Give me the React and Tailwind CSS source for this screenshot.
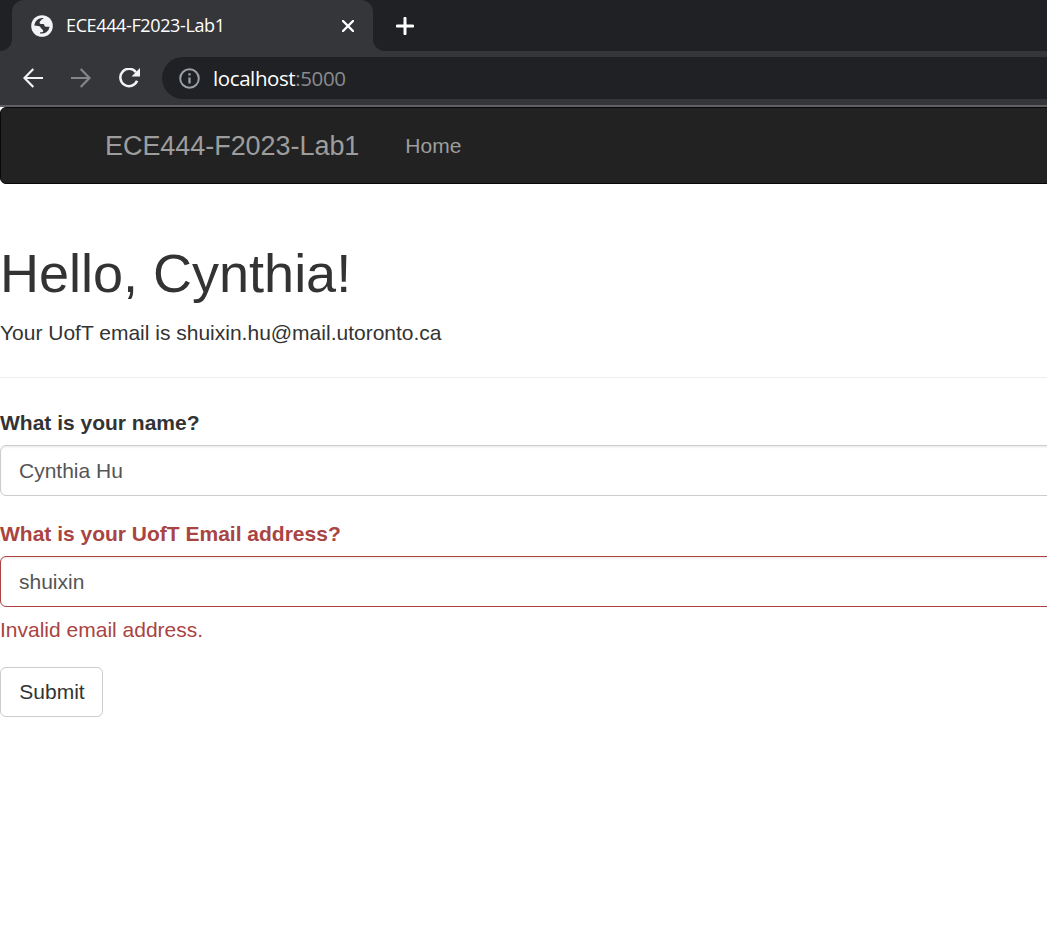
import React from "react";

function Globe() {
  return (
    <svg width="22" height="22" viewBox="0 0 22 22" className="shrink-0">
      <circle cx="11" cy="11" r="10.8" fill="#f1f3f4" />
      <path fill="#35363a" d="M12.8 3.2C12.2 4.2 10.5 4 10.2 5C10 6 8.9 6.2 8.6 7.2C8.4 8.4 9.2 9 10.4 9H12.4C13.6 9.2 13 10.8 14 11.4C15 12 16.5 11.7 18.6 11.7A7.9 7.9 0 0 1 9 18.4V17.4C10 17.1 11.8 17.4 12.2 16.2C12.4 14.8 11.1 14.2 10.3 13.4C9.4 12.2 8.8 11 7.2 11L3.2 10.6A8 8 0 0 1 12.8 3.2Z" />
    </svg>
  );
}

function BrowserChrome() {
  return (
    <header className="font-['Open_Sans','Noto_Sans',sans-serif]">
      <div className="flex h-[51px] bg-[#35363a]">
        <div className="w-3 rounded-br-xl bg-[#202124]" />
        <div className="flex w-[361px] bg-[#202124]">
          <div className="flex w-full items-center rounded-t-xl bg-[#35363a] pr-[19px] pl-[19px]">
            <Globe />
            <span className="ml-[13px] text-[18px] tracking-[-0.37px] text-white">ECE444-F2023-Lab1</span>
            <svg width="12" height="12" viewBox="0 0 12 12" className="ml-auto" stroke="#fff" strokeWidth="2.4" strokeLinecap="round">
              <path d="M1 1L11 11M11 1L1 11" />
            </svg>
          </div>
        </div>
        <div className="flex flex-1 items-center rounded-bl-xl bg-[#202124] pl-[23px]">
          <svg width="18" height="18" viewBox="0 0 18 18" stroke="#fff" strokeWidth="3" strokeLinecap="round">
            <path d="M1.3 9H16.7M9 1.3V16.7" />
          </svg>
        </div>
      </div>
      <div className="flex h-[54px] items-center bg-[#35363a]">
        <svg width="20" height="20" viewBox="0 0 20 20" className="ml-[23px]" fill="none" stroke="#f1f3f4" strokeWidth="2.2">
          <path d="M20 10H1.5M10.3 1L1.5 10L10.3 19" />
        </svg>
        <svg width="20" height="20" viewBox="0 0 20 20" className="ml-[28px]" fill="none" stroke="#85868a" strokeWidth="2.2">
          <path d="M0 10H18.5M9.7 1L18.5 10L9.7 19" />
        </svg>
        <svg width="21" height="20" viewBox="0 0 21 20" className="ml-[28px]" fill="none" stroke="#f1f3f4" strokeWidth="2.5">
          <path d="M17 4.2A8.7 8.7 0 1 0 18.1 12.8" />
          <path d="M21 0V8.4H12.6Z" fill="#f1f3f4" stroke="none" />
        </svg>
        <div className="ml-[22px] flex h-[42px] flex-1 items-center rounded-l-full bg-[#202124] pl-[17px]">
          <svg width="21" height="21" viewBox="0 0 21 21" fill="none" stroke="#9aa0a6" strokeWidth="2">
            <circle cx="10.5" cy="10.5" r="9.3" />
            <path strokeWidth="2.3" d="M10.5 9.4V15.6M10.5 5.2V7.5" />
          </svg>
          <span className="ml-[13px] text-[20.5px] tracking-[-0.4px] text-white">
            localhost<span className="text-[#8a8b8e]">:5000</span>
          </span>
        </div>
      </div>
      <div className="h-0.5 bg-[#606165]" />
    </header>
  );
}

function Navbar() {
  return (
    <nav className="mb-[60px] -mr-2 flex h-[77px] items-center rounded-[6px] border border-[#080808] bg-[#222] text-[#9d9d9d]">
      <a className="ml-[104px] text-[27px] leading-[30px] tracking-[-0.05px]">ECE444-F2023-Lab1</a>
      <a className="ml-[46px] text-[21px] leading-[30px]">Home</a>
    </nav>
  );
}

export default function App() {
  return (
    <div className="min-h-screen overflow-hidden bg-white">
      <BrowserChrome />
      <div className="font-['Liberation_Sans',Arial,sans-serif] text-[21px] leading-[30px] text-[#333]">
        <Navbar />
        <main>
          <h1 className="text-[54px] leading-[59px]">Hello, Cynthia!</h1>
          <p className="mt-[15px]">Your UofT email is shuixin.hu@mail.utoronto.ca</p>
          <hr className="mt-[29px] border-[#eee]" />
          <form className="mt-[30px]">
            <label className="block font-bold">What is your name?</label>
            <input
              defaultValue="Cynthia Hu"
              className="mt-[7px] block h-[51px] w-[1060px] rounded-[6px] border border-[#ccc] px-[18px] text-[#555] shadow-[inset_0_1.5px_1.5px_rgba(0,0,0,0.075)]"
            />
            <label className="mt-[23px] block font-bold text-[#a94442]">What is your UofT Email address?</label>
            <input
              defaultValue="shuixin"
              className="mt-[7px] block h-[51px] w-[1060px] rounded-[6px] border border-[#a94442] px-[18px] text-[#555] shadow-[inset_0_1.5px_1.5px_rgba(0,0,0,0.075)]"
            />
            <p className="mt-2 text-[#a94442]">Invalid email address.</p>
            <button type="button" className="mt-[22px] block h-[50px] w-[103px] rounded-[6px] border border-[#ccc] bg-white pl-px">
              Submit
            </button>
          </form>
        </main>
      </div>
    </div>
  );
}
